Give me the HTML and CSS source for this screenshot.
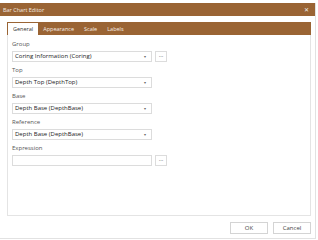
FILE: index.html
```html
<!DOCTYPE html>
<html lang="en">

<head>
    <meta charset="UTF-8">
    <title>Bar Chart Editor</title>
    <link rel="stylesheet" href="styles.css">
</head>

<body>
    <div class="window">
        <div class="titlebar">
            <span>Bar Chart Editor</span>
            <span class="close">&#x2715;</span>
        </div>
        <div class="content">
            <div class="tabs">
                <div class="tab active">General</div>
                <div class="tab">Appearance</div>
                <div class="tab">Scale</div>
                <div class="tab">Labels</div>
            </div>
            <div class="panel">
                <div class="form-group">
                    <label>Group</label>
                    <div class="row">
                        <div class="combo">Coring Information (Coring)<span class="arrow">&#9662;</span></div>
                        <div class="dots">...</div>
                    </div>
                </div>
                <div class="form-group">
                    <label>Top</label>
                    <div class="row">
                        <div class="combo">Depth Top (DepthTop)<span class="arrow">&#9662;</span></div>
                    </div>
                </div>
                <div class="form-group">
                    <label>Base</label>
                    <div class="row">
                        <div class="combo">Depth Base (DepthBase)<span class="arrow">&#9662;</span></div>
                    </div>
                </div>
                <div class="form-group">
                    <label>Reference</label>
                    <div class="row">
                        <div class="combo">Depth Base (DepthBase)<span class="arrow">&#9662;</span></div>
                    </div>
                </div>
                <div class="form-group">
                    <label>Expression</label>
                    <div class="row">
                        <div class="combo input"></div>
                        <div class="dots">...</div>
                    </div>
                </div>
            </div>
            <div class="footer">
                <div class="button">OK</div>
                <div class="button">Cancel</div>
            </div>
        </div>
    </div>
</body>

</html>
```

FILE: styles.css
```css
body {
    margin: 0;
    background-color: #ffffff;
    font-family: "Open Sans", "Noto Sans", sans-serif;
    font-size: 6px;
    color: #333;
}

.window {
    margin-top: 3px;
    width: 315px;
    height: 235px;
    border-right: 1px solid #e2e2e2;
    border-bottom: 1px solid #e2e2e2;
    background-color: white;
}

.titlebar {
    height: 13px;
    background-color: #9a6434;
    color: #f4ebe2;
    display: flex;
    justify-content: space-between;
    align-items: center;
    padding: 0 6px 0 3px;
    font-size: 5.5px;
}

.close {
    font-size: 6px;
    color: #eee;
}

.content {
    padding: 6px 4px 0 7px;
}

.tabs {
    height: 13px;
    background-color: #9a6434;
    display: flex;
    align-items: flex-end;
    padding-left: 1px;
}

.tab {
    color: #f6ede4;
    height: 11px;
    line-height: 11px;
    padding: 0 5px;
    font-size: 5.5px;
}

.tab.active {
    background-color: white;
    color: #333;
    height: 12px;
    line-height: 12px;
}

.panel {
    height: 175px;
    border: 1px solid #e4e4e4;
    border-top: none;
    padding: 5px 0 0 4px;
}

.form-group {
    margin-bottom: 4px;
}

label {
    display: block;
    height: 8px;
    line-height: 8px;
    margin-bottom: 3px;
    color: #555;
}

.row {
    display: flex;
    gap: 3px;
}

.combo {
    position: relative;
    width: 136px;
    height: 9px;
    line-height: 9px;
    border: 1px solid #dcdcdc;
    padding-left: 2px;
    color: #222;
}

.arrow {
    position: absolute;
    right: 5px;
    top: 0;
    font-size: 4px;
    color: #666;
}

.dots {
    width: 10px;
    height: 9px;
    line-height: 7px;
    border: 1px solid #dcdcdc;
    text-align: center;
    color: #555;
}

.footer {
    display: flex;
    justify-content: flex-end;
    gap: 5px;
    padding-top: 6px;
}

.button {
    width: 36px;
    height: 10px;
    line-height: 10px;
    border: 1px solid #d4d4d4;
    text-align: center;
    color: #444;
}
```
